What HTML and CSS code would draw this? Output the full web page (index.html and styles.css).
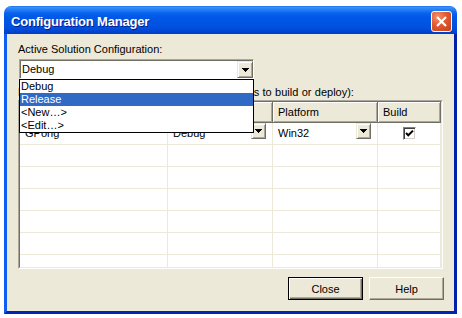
FILE: index.html
```html
<!DOCTYPE html>
<html lang="en">

<head>
    <meta charset="UTF-8">
    <title>Configuration Manager</title>
    <link rel="stylesheet" href="styles.css">
</head>
<body>
    <div class="window">
        <div class="titlebar">
            <span class="title">Configuration Manager</span>
            <span class="close-x">
                <svg width="19" height="19" viewBox="0 0 19 19"><path d="M5 5 L14 14 M14 5 L5 14" stroke="#fff" stroke-width="2.2" /></svg>
            </span>
        </div>
        <div class="client">
            <div class="label">Active Solution Configuration:</div>
            <div class="combo-wrap">
                <div class="combo">
                    <span class="combo-text">Debug</span>
                    <span class="drop-btn"><svg width="7" height="4" viewBox="0 0 7 4" shape-rendering="crispEdges"><path d="M0 0 H7 L4 4 H3 Z" fill="#000" /></svg></span>
                </div>
                <!-- open list of the combo -->
                <ul class="droplist">
                    <li>Debug</li>
                    <li class="sel">Release</li>
                    <li>&lt;New…&gt;</li>
                    <li>&lt;Edit…&gt;</li>
                </ul>
            </div>
            <div class="label second">Project contexts (check the project configurations to build or deploy):</div>
            <div class="grid-frame">
                <div class="grid">
                    <div class="hcell">Project</div>
                    <div class="hcell">Configuration</div>
                    <div class="hcell">Platform</div>
                    <div class="hcell">Build</div>

                    <div class="cell">GPong</div>
                    <div class="cell"><span class="cell-text">Debug</span><span class="drop-btn small"><svg width="7" height="4" viewBox="0 0 7 4" shape-rendering="crispEdges"><path d="M0 0 H7 L4 4 H3 Z" fill="#000" /></svg></span></div>
                    <div class="cell"><span class="cell-text">Win32</span><span class="drop-btn small"><svg width="7" height="4" viewBox="0 0 7 4" shape-rendering="crispEdges"><path d="M0 0 H7 L4 4 H3 Z" fill="#000" /></svg></span></div>
                    <div class="cell check-cell"><span class="check"><svg width="11" height="11" viewBox="0 0 11 11"><path d="M2 5 L4.3 7.3 L9 2.6" fill="none" stroke="#000" stroke-width="2" /></svg></span></div>

                    <div class="cell"></div><div class="cell"></div><div class="cell"></div><div class="cell"></div>
                    <div class="cell"></div><div class="cell"></div><div class="cell"></div><div class="cell"></div>
                    <div class="cell"></div><div class="cell"></div><div class="cell"></div><div class="cell"></div>
                    <div class="cell"></div><div class="cell"></div><div class="cell"></div><div class="cell"></div>
                    <div class="cell"></div><div class="cell"></div><div class="cell"></div><div class="cell"></div>
                    <div class="cell"></div><div class="cell"></div><div class="cell"></div><div class="cell"></div>
                    <div class="cell"></div><div class="cell"></div><div class="cell"></div><div class="cell"></div>
                </div>
            </div>
            <div class="buttons">
                <button class="btn default">Close</button>
                <button class="btn">Help</button>
            </div>
        </div>
    </div>
</body>
</html>
```

FILE: styles.css
```css
* {
    margin: 0;
    padding: 0;
    box-sizing: border-box;
}
ul {
    list-style: none;
}
body {
    background: #fff;
    padding: 6px 0 0 4px;
    font-family: "Liberation Sans", Arial, sans-serif;
    font-size: 11px;
    color: #000;
}
.window {
    width: 453px;
}
.titlebar {
    height: 28px;
    display: flex;
    align-items: flex-start;
    justify-content: space-between;
    padding: 5px 5px 0 7px;
    border-radius: 7px 7px 0 0;
    background: linear-gradient(to bottom, #0a5fe6 0, #3d94fb 1px, #2b83f7 3px, #0a64ee 7px, #0058e8 11px, #0054e3 17px, #0050dd 22px, #0047d2 25px, #003dc4 28px);
}
.title {
    margin-top: 3px;
    font-size: 13px;
    line-height: 16px;
    font-weight: bold;
    color: #fff;
    letter-spacing: -0.2px;
    text-shadow: 1px 1px 0 #0a1a8c;
}
.close-x {
    width: 21px;
    height: 21px;
    border: 1px solid #fff;
    border-radius: 3px;
    background: radial-gradient(circle at 30% 25%, #f29070 0, #e0592f 45%, #c5401a 100%);
    display: flex;
}
.client {
    height: 280px;
    background: #ece9d8;
    border-left: 3px solid #0d5ef2;
    border-right: 3px solid #0021a8;
    border-bottom: 3px solid #0024b3;
    padding: 9px 11px 0 11px;
}
.label {
    line-height: 13px;
    height: 13px;
    white-space: nowrap;
}
.label.second {
    margin-top: 7px;
    word-spacing: 0.3px;
}
.combo-wrap {
    position: relative;
    width: 235px;
    margin: 3px 0 0 1px;
    z-index: 2;
}
.combo {
    height: 20px;
    display: flex;
    background: #fff;
    border: 1px solid;
    border-color: #aca899 #fff #fff #aca899;
    box-shadow: inset 1px 1px #716f64;
}
.combo-text {
    flex: 1;
    padding: 1px 0 0 2px;
    line-height: 16px;
}
.drop-btn {
    width: 16px;
    height: 17px;
    margin-top: 1px;
    display: flex;
    align-items: center;
    justify-content: center;
    background: #ece9d8;
    border: 1px solid;
    border-color: #ece9d8 #716f64 #716f64 #ece9d8;
    box-shadow: inset 1px 1px #fff, inset -1px -1px #aca899;
}
.drop-btn.small {
    width: 15px;
    height: 16px;
    margin: 0 6px 0 auto;
}
.droplist {
    position: absolute;
    top: 100%;
    left: 0;
    width: 235px;
    background: #fff;
    border: 1px solid #000;
}
.droplist li {
    line-height: 13px;
    height: 13px;
    padding-left: 1px;
}
.droplist li.sel {
    background: #316ac5;
    color: #fff;
}
.grid-frame {
    margin-top: 1px;
    width: 425px;
    height: 169px;
    border: 1px solid;
    border-color: #aca899 #fff #fff #aca899;
}
.grid {
    height: 167px;
    overflow: hidden;
    background: #fff;
    border: 1px solid;
    border-color: #716f64 #ece9d8 #ece9d8 #716f64;
    display: grid;
    grid-template-columns: 148px 105px 105px 63px;
    grid-template-rows: 21px;
    grid-auto-rows: 22px;
}
.hcell {
    background: #ece9d8;
    border-right: 1px solid #716f64;
    border-bottom: 1px solid #716f64;
    box-shadow: inset 1px 1px #fff, inset -1px -1px #aca899;
    padding: 1px 0 0 5px;
    line-height: 19px;
    white-space: nowrap;
    overflow: hidden;
}
.cell {
    display: flex;
    align-items: flex-start;
    border-right: 1px solid #ece9d8;
    border-bottom: 1px solid #ece9d8;
    padding-left: 5px;
    line-height: 21px;
    white-space: nowrap;
}
.cell-text {
    flex: 1;
}
.check-cell {
    padding: 0;
    justify-content: center;
    align-items: center;
}
.check {
    width: 13px;
    height: 13px;
    display: flex;
    background: #fff;
    border: 1px solid;
    border-color: #808080 #fff #fff #808080;
    box-shadow: inset 1px 1px #404040, inset -1px -1px #d4d0c8;
}
.buttons {
    display: flex;
    justify-content: flex-end;
    gap: 6px;
    margin: 8px -1px 0 0;
}
.btn {
    width: 75px;
    height: 23px;
    font-family: inherit;
    font-size: 11px;
    color: #000;
    background: #ece9d8;
    border: 1px solid;
    border-color: #fff #716f64 #716f64 #fff;
    box-shadow: inset -1px -1px #aca899;
}
.btn.default {
    border-color: #000;
    box-shadow: inset 1px 1px #fff, inset -1px -1px #716f64, inset -2px -2px #aca899;
}
```
